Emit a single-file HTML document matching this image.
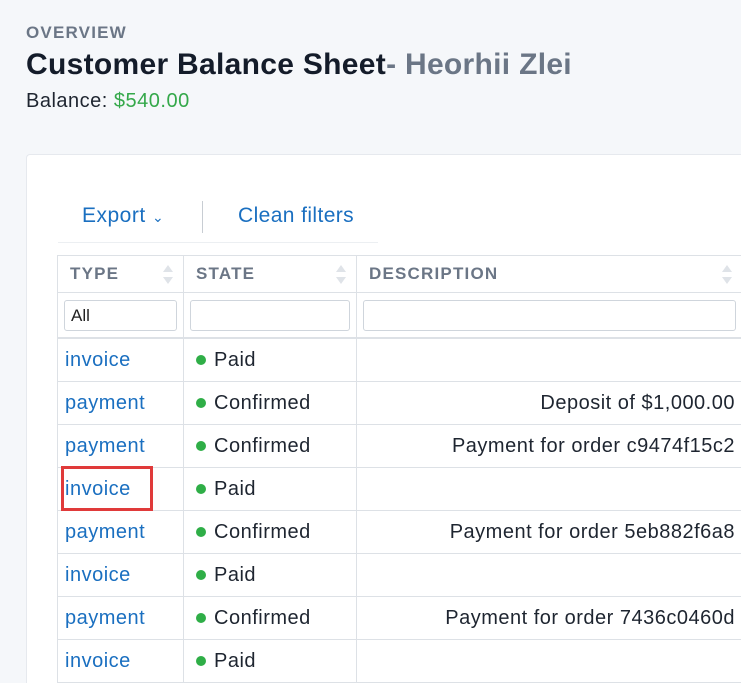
<!DOCTYPE html><html><head><style>
html,body{margin:0;width:741px;height:683px;overflow:hidden}
body{background:#f5f7fa;font-family:"Liberation Sans",sans-serif;position:relative}
.a{position:absolute;white-space:nowrap}
.card{position:absolute;left:26px;top:154px;width:715px;height:529px;background:#fff;border-left:1px solid #e6e9ee;border-top:1px solid #e6e9ee;border-radius:4px 0 0 0;box-sizing:border-box}
table{position:absolute;left:57px;top:255px;border-collapse:collapse;width:686px;font-size:20px;letter-spacing:0.5px;color:#1e2530}
td,th{border:1px solid #dde1e6;padding:0 7px}
th{height:36px;text-align:left;font-size:17px;letter-spacing:1.2px;color:#6b7686;font-weight:bold;position:relative;padding-left:12px}
th i{position:absolute;right:10px;top:9px;width:0;height:0;border:5px solid transparent;border-bottom:7px solid #dfe3e8;border-top:0}
th b{position:absolute;right:10px;top:21px;width:0;height:0;border:5px solid transparent;border-top:7px solid #dfe3e8;border-bottom:0}
.f td{height:44px;border-bottom:2px solid #dde1e6;padding:0 6px}
.f div{height:29px;border:1px solid #cfd5dc;border-radius:3px;font-size:17px;line-height:29px;padding-left:6px;color:#222;letter-spacing:0}
tbody tr.r td{height:42px}
td.t{color:#1a6fc0}
td.s{padding-left:12px}
.d{display:inline-block;width:10px;height:10px;border-radius:50%;background:#2fae47;margin-right:8px;vertical-align:1px}
td.x{text-align:right}
</style></head><body>
<div class="a" style="left:26px;top:23px;font-size:17px;font-weight:bold;color:#6b7686;letter-spacing:1.2px">OVERVIEW</div>
<div class="a" style="left:26px;top:48px;font-size:30px;font-weight:bold;color:#141c2a;letter-spacing:0.3px">Customer Balance Sheet<span style="color:#6b7686">- Heorhii Zlei</span></div>
<div class="a" style="left:26px;top:90px;font-size:20px;color:#1e2530;letter-spacing:0.5px">Balance: <span style="color:#34a84a">$540.00</span></div>
<div class="card"></div>
<div class="a" style="left:82px;top:204px;font-size:21px;color:#1a6fc0;letter-spacing:0.5px">Export <span style="font-size:14px">&#8964;</span></div>
<div class="a" style="left:202px;top:201px;width:1px;height:32px;background:#c8cdd3"></div>
<div class="a" style="left:238px;top:204px;font-size:21px;color:#1a6fc0;letter-spacing:0.4px">Clean filters</div>
<div class="a" style="left:58px;top:242px;width:320px;height:1px;background:#eceff2"></div>
<table>
<tr><th style="width:106px">TYPE<i></i><b></b></th><th style="width:153px">STATE<i></i><b></b></th><th>DESCRIPTION<i></i><b></b></th></tr>
<tr class="f"><td><div>All</div></td><td><div></div></td><td><div></div></td></tr>
<tr class="r"><td class="t">invoice</td><td class="s"><span class="d"></span>Paid</td><td class="x"></td></tr>
<tr class="r"><td class="t">payment</td><td class="s"><span class="d"></span>Confirmed</td><td class="x">Deposit of $1,000.00</td></tr>
<tr class="r"><td class="t">payment</td><td class="s"><span class="d"></span>Confirmed</td><td class="x">Payment for order c9474f15c2</td></tr>
<tr class="r"><td class="t">invoice</td><td class="s"><span class="d"></span>Paid</td><td class="x"></td></tr>
<tr class="r"><td class="t">payment</td><td class="s"><span class="d"></span>Confirmed</td><td class="x">Payment for order 5eb882f6a8</td></tr>
<tr class="r"><td class="t">invoice</td><td class="s"><span class="d"></span>Paid</td><td class="x"></td></tr>
<tr class="r"><td class="t">payment</td><td class="s"><span class="d"></span>Confirmed</td><td class="x">Payment for order 7436c0460d</td></tr>
<tr class="r"><td class="t">invoice</td><td class="s"><span class="d"></span>Paid</td><td class="x"></td></tr>
</table>
<div class="a" style="left:61px;top:466px;width:86px;height:39px;border:3px solid #e03a3a"></div>
</body></html>
